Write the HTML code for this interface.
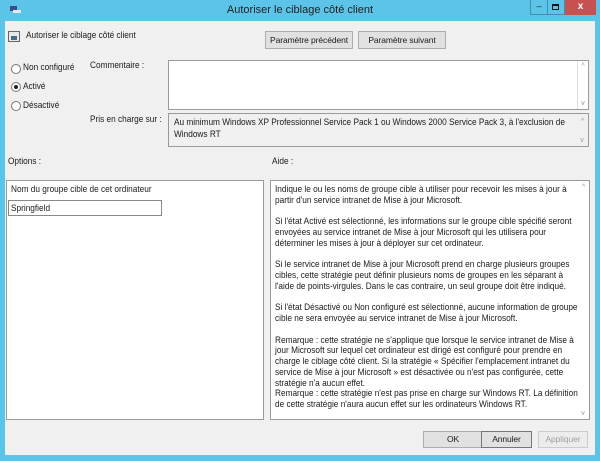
<!DOCTYPE html>
<html><head><meta charset="utf-8"><style>
*{margin:0;padding:0;box-sizing:border-box}
body{width:600px;height:461px;background:#5cc4e8;font-family:"Liberation Sans",sans-serif;font-size:9.5px;color:#1a1a1a;position:relative;overflow:hidden}
.a{position:absolute;white-space:nowrap}
.n{transform:scaleX(.87);transform-origin:0 0}
.win{position:absolute;left:5px;top:21px;width:590px;height:434px;background:#f0f0f0}
.btn{position:absolute;background:#e1e1e1;border:1px solid #adadad;text-align:center;line-height:15px;font-size:8.5px;letter-spacing:-.1px}
.box{position:absolute;background:#fff;border:1px solid #9a9a9a}
.gbox{position:absolute;background:#f0f0f0;border:1px solid #9a9a9a}
.sb{position:absolute;right:0;top:0;bottom:0;width:11px;border-left:1px solid #ddd;color:#999;font-size:7px;text-align:center}
.radio{position:absolute;width:10px;height:10px;border:1px solid #777;border-radius:50%;background:#fff}
.help div{height:10.75px;line-height:10.75px}
</style></head><body>
<div class="a" style="left:9px;top:4px;width:12px;height:10px;"><div style="position:absolute;left:1px;top:2px;width:7px;height:5px;background:#3a4a8a"></div><div style="position:absolute;left:4px;top:6px;width:8px;height:3px;background:#e6e6f0"></div></div>
<div class="a" style="left:0;width:600px;top:4px;text-align:center;font-size:11px;color:#222">Autoriser le ciblage côté client</div>
<div class="a" style="left:530px;top:0;width:18px;height:15px;background:#5cc4e8;border:1px solid #3f8fb0;border-top:none;text-align:center;font-size:9px;line-height:13px;color:#222">–</div>
<div class="a" style="left:547px;top:0;width:18px;height:15px;border:1px solid #3f8fb0;border-top:none;border-left:none"><div style="margin:4px auto;width:7px;height:6px;border:1.5px solid #111;border-top-width:2.5px"></div></div>
<div class="a" style="left:565px;top:0;width:31px;height:15px;background:#c75050;color:#fff;text-align:center;font-weight:bold;font-size:10px;line-height:14px">x</div>
<div class="win"></div>
<div class="a" style="left:8px;top:31px;width:12px;height:11px;border:1px solid #666;background:#e8e8e8"><div style="position:absolute;left:2px;top:4px;width:6px;height:4px;background:#4a6a8a"></div></div>
<div class="a n" style="left:26px;top:30px">Autoriser le ciblage côté client</div>
<div class="btn" style="left:265px;top:31px;width:88px;height:18px;line-height:16px">Paramètre précédent</div>
<div class="btn" style="left:358px;top:31px;width:88px;height:18px;line-height:16px">Paramètre suivant</div>
<div class="radio" style="left:11px;top:64px"></div><div class="a n" style="left:23px;top:62px">Non configuré</div>
<div class="radio" style="left:11px;top:82px"><div style="width:4px;height:4px;background:#222;border-radius:50%;margin:2px"></div></div><div class="a n" style="left:23px;top:81px">Activé</div>
<div class="radio" style="left:11px;top:101px"></div><div class="a n" style="left:23px;top:100px">Désactivé</div>
<div class="a n" style="left:90px;top:60px">Commentaire :</div>
<div class="box" style="left:168px;top:60px;width:421px;height:50px"><div class="sb"><div style="margin-top:2px">^</div><div style="position:absolute;bottom:2px;width:10px">v</div></div></div>
<div class="a n" style="left:90px;top:114px">Pris en charge sur :</div>
<div class="gbox" style="left:168px;top:113px;width:421px;height:34px"><div class="a n" style="left:5px;top:3px;line-height:11.5px">Au minimum Windows XP Professionnel Service Pack 1 ou Windows 2000 Service Pack 3, à l'exclusion de<br>Windows RT</div><div class="sb" style="border-left:none"><div style="margin-top:4px">^</div><div style="position:absolute;bottom:2px;width:10px">v</div></div></div>
<div class="a n" style="left:8px;top:156px">Options :</div>
<div class="a n" style="left:272px;top:156px">Aide :</div>
<div class="box" style="left:6px;top:180px;width:258px;height:240px"></div>
<div class="a n" style="left:11px;top:184px">Nom du groupe cible de cet ordinateur</div>
<div class="box" style="left:8px;top:200px;width:154px;height:16px;border-color:#888"><div class="a n" style="left:2px;top:2px">Springfield</div></div>
<div class="box" style="left:270px;top:180px;width:320px;height:240px"><div class="sb" style="border-left:none"><div style="margin-top:3px">^</div><div style="position:absolute;bottom:2px;width:10px">v</div></div></div>
<div class="a help n" style="left:275px;top:185px">
<div>Indique le ou les noms de groupe cible à utiliser pour recevoir les mises à jour à</div>
<div>partir d'un service intranet de Mise à jour Microsoft.</div><div></div>
<div>Si l'état Activé est sélectionné, les informations sur le groupe cible spécifié seront</div>
<div>envoyées au service intranet de Mise à jour Microsoft qui les utilisera pour</div>
<div>déterminer les mises à jour à déployer sur cet ordinateur.</div><div></div>
<div>Si le service intranet de Mise à jour Microsoft prend en charge plusieurs groupes</div>
<div>cibles, cette stratégie peut définir plusieurs noms de groupes en les séparant à</div>
<div>l'aide de points-virgules. Dans le cas contraire, un seul groupe doit être indiqué.</div><div></div>
<div>Si l'état Désactivé ou Non configuré est sélectionné, aucune information de groupe</div>
<div>cible ne sera envoyée au service intranet de Mise à jour Microsoft.</div><div></div>
<div>Remarque : cette stratégie ne s'applique que lorsque le service intranet de Mise à</div>
<div>jour Microsoft sur lequel cet ordinateur est dirigé est configuré pour prendre en</div>
<div>charge le ciblage côté client. Si la stratégie « Spécifier l'emplacement intranet du</div>
<div>service de Mise à jour Microsoft » est désactivée ou n'est pas configurée, cette</div>
<div>stratégie n'a aucun effet.</div>
<div>Remarque : cette stratégie n'est pas prise en charge sur Windows RT. La définition</div>
<div>de cette stratégie n'aura aucun effet sur les ordinateurs Windows RT.</div>
</div>
<div class="btn" style="left:423px;top:431px;width:60px;height:17px">OK</div>
<div class="btn" style="left:481px;top:431px;width:51px;height:17px;border-color:#777">Annuler</div>
<div class="btn" style="left:538px;top:431px;width:50px;height:17px;color:#a0a0a0;background:#ececec;border-color:#ccc">Appliquer</div>
</body></html>
